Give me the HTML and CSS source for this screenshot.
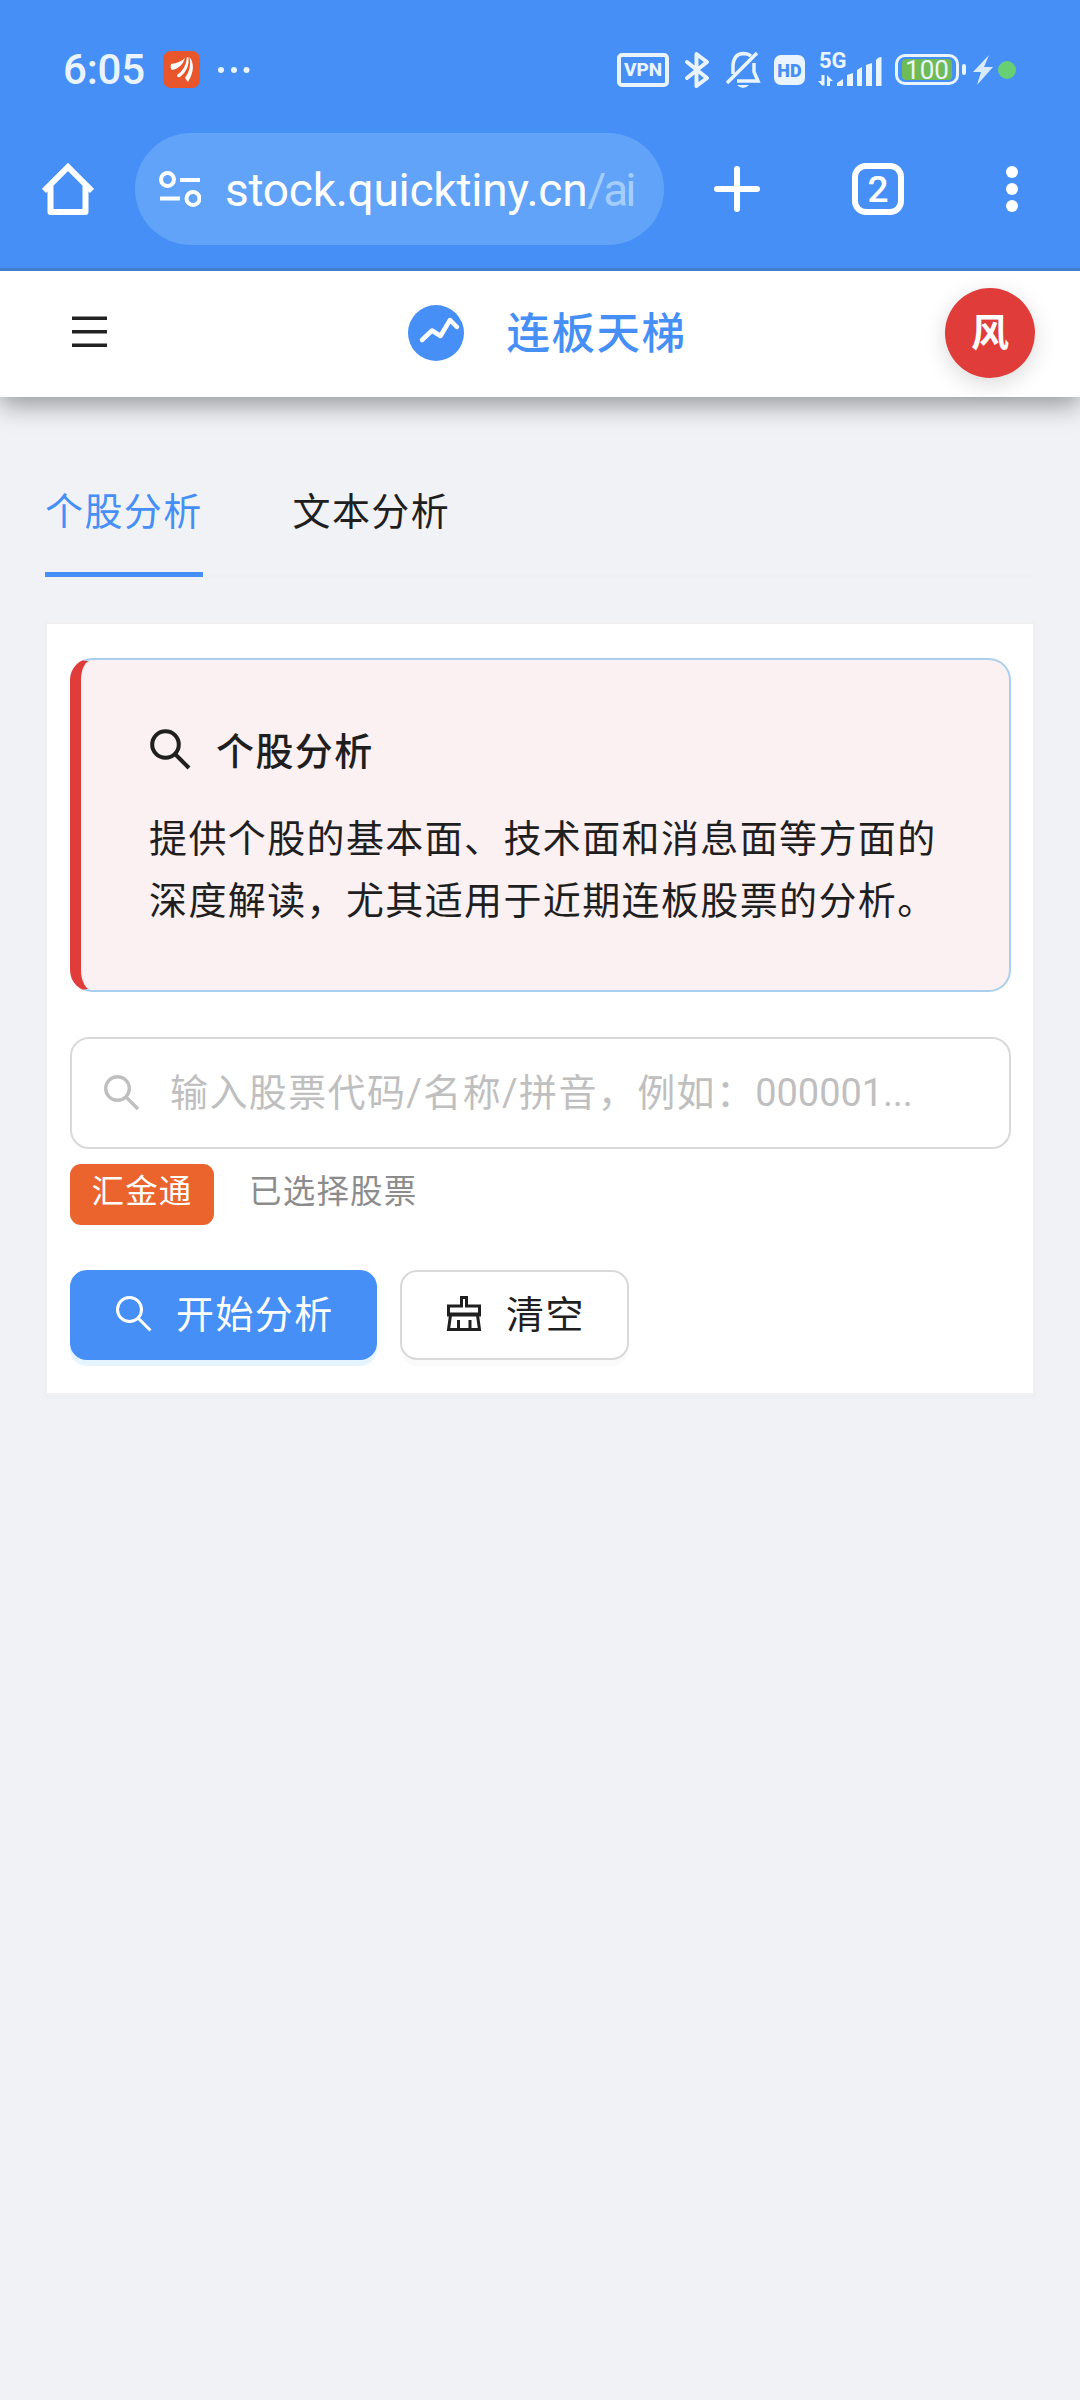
FILE: index.html
```html
<!DOCTYPE html>
<html lang="zh-CN">
<head>
  <meta charset="UTF-8">
  <meta name="viewport" content="width=device-width, initial-scale=1.0">
  <title>连板天梯</title>
  <link rel="stylesheet" href="styles.css">
</head>
<body>
  <div class="browser">
    <div class="status-bar">
      <span class="time">6:05</span>
      <svg class="app-icon" width="37" height="37" viewBox="0 0 37 37">
        <rect width="37" height="37" rx="8" fill="#e9562b"/>
        <path d="M8 13Q17 12 22 7Q19 17 9 19Q7 17 8 13ZM14 24Q23 18 24 6L25.500 6.500Q27 18 17 26Q14 27 14 24ZM22 27Q29 18 26.500 6Q34 16 25 31Z" fill="#fff"/>
      </svg>
      <svg class="more-dots" width="32" height="8" viewBox="0 0 32 8" fill="#e8f4ff">
        <circle cx="3" cy="4" r="3"/><circle cx="16" cy="4" r="3"/><circle cx="28.500" cy="4" r="3"/>
      </svg>
      <div class="status-right">
        <span class="vpn">VPN</span>
        <svg class="bluetooth" width="26" height="38" viewBox="0 0 26 38" fill="none" stroke="#eaf4ff" stroke-width="4" stroke-linejoin="round" stroke-linecap="round">
          <path d="M3 11L23 27L12.500 35V3L23 11L3 27"/>
        </svg>
        <svg class="bell" width="36" height="38" viewBox="0 0 36 38" fill="none" stroke="#eaf4ff" stroke-width="3.500">
          <path d="M8 23V14Q9 3 18 2.500Q23 2.500 26 5M29 12V21L33 30H12M2 32L32 2"/>
          <path d="M12 34H24Q18 40 12 34Z" fill="#eaf4ff" stroke="none"/>
        </svg>
        <span class="hd">HD</span>
        <div class="signal">
          <span class="net">5G</span>
          <svg width="64" height="32" viewBox="0 0 64 32" fill="#eaf4ff">
            <path d="M0 27L4 31.500H6.500V21H3.500V27ZM9 32V21L15 27H12V32ZM19 32V29L25 25V32ZM29 32V21L35 19V32ZM39 32V16L44 13V32ZM48 32V11L54 9V32ZM58 32V6Q60 3 63.500 3V32Z"/>
          </svg>
        </div>
        <span class="battery"><span class="level">100</span></span>
        <span class="battery-tip"></span>
        <svg class="bolt" width="20" height="30" viewBox="0 0 20 30"><path d="M16 0L0 17H8L4 30L20 12H11Z" fill="#d9ebff"/></svg>
        <span class="mic-dot"></span>
      </div>
    </div>

    <div class="toolbar">
      <svg class="home" width="52" height="52" viewBox="0 0 52 52" fill="none" stroke="#fff" stroke-width="6" stroke-linejoin="round">
        <path d="M2 28L26 4L50 28" stroke-linejoin="miter"/>
        <path d="M8.500 23V49H43.500V23"/>
      </svg>
      <div class="url-box">
        <svg width="42" height="36" viewBox="0 0 42 36" fill="none" stroke="#fff" stroke-width="4">
          <circle cx="8.500" cy="8.500" r="6.500"/><path d="M21 9H41M1 27.500H21"/><circle cx="34" cy="27.500" r="6.500"/>
        </svg>
        <span class="url">stock.quicktiny.cn<span class="path">/ai</span></span>
      </div>
      <svg class="plus" width="48" height="48" viewBox="0 0 48 48" stroke="#fff" stroke-width="6" stroke-linecap="round"><path d="M24 4V44M4 24H44"/></svg>
      <span class="tab-count">2</span>
      <svg class="menu-dots" width="12" height="46" viewBox="0 0 12 46" fill="#fff"><circle cx="6" cy="6" r="6"/><circle cx="6" cy="23" r="6"/><circle cx="6" cy="40" r="6"/></svg>
    </div>
  </div>

  <header class="header">
    <svg class="hamburger" width="35" height="32" viewBox="0 0 35 32" fill="#222"><path d="M0 .5H35V4H0ZM0 14H35V17.500H0ZM0 27.500H35V31H0Z"/></svg>
    <div class="brand">
      <svg width="56" height="56" viewBox="0 0 56 56">
        <circle cx="28" cy="28" r="28" fill="#458ff7"/>
        <path d="M14 35L24 25.500L32.500 31L42 15L49 22" fill="none" stroke="#fff" stroke-width="4.500" stroke-linecap="round" stroke-linejoin="round"/>
      </svg>
      <span>连板天梯</span>
    </div>
    <div class="avatar">风</div>
  </header>

  <main class="content">
    <nav class="tabs">
      <a class="tab active">个股分析</a>
      <a class="tab">文本分析</a>
    </nav>

    <section class="card">
      <div class="intro">
        <h2>
          <svg width="41" height="41" viewBox="0 0 41 41" fill="none" stroke="#1f1f1f" stroke-width="4"><circle cx="15.500" cy="15.500" r="13.300"/><path d="M25 25L39 39"/></svg>
          <span>个股分析</span>
        </h2>
        <p>提供个股的基本面、技术面和消息面等方面的深度解读，尤其适用于近期连板股票的分析。</p>
      </div>

      <div class="search">
        <svg width="36" height="36" viewBox="0 0 36 36" fill="none" stroke="#bfbfbf" stroke-width="3.400"><circle cx="13.500" cy="13.500" r="11.800"/><path d="M22 22L34 34"/></svg>
        <span class="placeholder">输入股票代码/名称/拼音，例如：<span class="num">000001...</span></span>
      </div>

      <div class="selected">
        <span class="tag">汇金通</span>
        <span class="hint">已选择股票</span>
      </div>

      <div class="actions">
        <button class="btn primary">
          <svg width="36" height="36" viewBox="0 0 36 36" fill="none" stroke="#fff" stroke-width="3"><circle cx="13.500" cy="13.500" r="12"/><path d="M22 22L34.500 34.500"/></svg>
          <span>开始分析</span>
        </button>
        <button class="btn">
          <svg width="36" height="36" viewBox="0 0 36 36" fill="none" stroke="#1f1f1f" stroke-width="3"><path d="M2.500 19V10H15.500V1.500H20.500V10H33.500V19ZM2.500 18H33.500M4.500 19L2.500 33.500H33.500L31.500 19M12.500 33V24M24 33V24"/></svg>
          <span>清空</span>
        </button>
      </div>
    </section>
  </main>
</body>
</html>
```
FILE: styles.css
```css
* {
  box-sizing: border-box;
}
body {
  margin: 0;
  min-height: 2400px;
  background: #f0f2f5;
  color: #1f1f1f;
  font-family: Roboto, "Noto Sans CJK SC", sans-serif;
  font-size: 38px;
  letter-spacing: 1.375px;
}
svg {
  display: block;
  flex-shrink: 0;
}

/* 浏览器顶部 */
.browser {
  height: 271px;
  background: #458ff7;
  border-bottom: 3px solid #437fce;
  letter-spacing: 0;
}
.status-bar {
  display: flex;
  align-items: center;
  height: 133px;
  padding: 6px 64px 0 63px;
  color: #eaf4ff;
}
.time {
  width: 100px;
  font-size: 42px;
  font-weight: 500;
  letter-spacing: -0.2px;
}
.more-dots {
  margin-left: 18px;
}
.status-right {
  display: flex;
  align-items: center;
  margin-left: auto;
}
.vpn {
  width: 52px;
  height: 34px;
  border: 4px solid #eaf4ff;
  border-radius: 5px;
  font-size: 19px;
  font-weight: 800;
  line-height: 26px;
  text-align: center;
}
.bluetooth {
  margin-left: 15px;
}
.bell {
  margin-left: 15px;
}
.hd {
  width: 31px;
  height: 30px;
  margin-left: 13px;
  border-radius: 7px;
  background: #eaf4ff;
  color: #458ff7;
  font-size: 18px;
  font-weight: 900;
  line-height: 31px;
  text-align: center;
}
.signal {
  position: relative;
  margin-left: 13px;
}
.net {
  position: absolute;
  top: -4px;
  left: 1px;
  font-size: 22px;
  font-weight: 700;
  line-height: 22px;
}
.battery {
  width: 64px;
  height: 31px;
  margin-left: 13px;
  padding: 2px 4px;
  border: 3px solid #eaf4ff;
  border-radius: 10px;
}
.level {
  display: block;
  width: 50px;
  height: 21px;
  border-radius: 4px;
  background: #6fbb57;
  font-size: 26px;
  line-height: 22px;
  text-align: center;
}
.battery-tip {
  width: 4px;
  height: 11px;
  margin-left: 3px;
  border-radius: 2px;
  background: #eaf4ff;
}
.bolt {
  margin-left: 7px;
}
.mic-dot {
  width: 18px;
  height: 18px;
  margin-left: 5px;
  border-radius: 50%;
  background: #68d073;
}

.toolbar {
  display: flex;
  align-items: center;
  height: 112px;
  padding-left: 42px;
}
.url-box {
  display: flex;
  align-items: center;
  width: 529px;
  height: 112px;
  margin-left: 41px;
  padding-left: 24px;
  border-radius: 56px;
  background: #61a3f8;
}
.url {
  margin-top: 2px;
  margin-left: 24px;
  color: #fff;
  font-size: 46px;
  letter-spacing: -0.25px;
  white-space: nowrap;
}
.path {
  color: #a5cdfb;
  letter-spacing: -3px;
}
.plus {
  margin-left: 49px;
}
.tab-count {
  width: 52px;
  height: 52px;
  margin-left: 91px;
  border: 6px solid #fff;
  border-radius: 14px;
  color: #fff;
  font-size: 37px;
  font-weight: 500;
  line-height: 42px;
  text-align: center;
}
.menu-dots {
  margin-left: 102px;
}

/* 页头 */
.header {
  display: flex;
  align-items: center;
  justify-content: space-between;
  height: 126px;
  padding: 0 45px 0 72px;
  background: #fff;
  box-shadow: 0 8px 24px rgba(0, 0, 0, 0.38);
}
.browser {
  position: relative;
}
.hamburger {
  margin-right: 55px;
  margin-bottom: 5px;
}
.brand {
  display: flex;
  align-items: center;
  gap: 43px;
  margin-right: 13px;
  margin-bottom: 2px;
  color: #458ff7;
  font-size: 43.5px;
  font-weight: 500;
  letter-spacing: 1.5px;
  line-height: 56px;
}
.brand span {
  margin-top: 4px;
}
.avatar {
  width: 90px;
  height: 90px;
  margin-bottom: 2px;
  border-radius: 50%;
  background: #e03c3a;
  box-shadow: 0 6px 22px rgba(0, 0, 0, 0.15);
  color: #fff;
  font-weight: 700;
  letter-spacing: 0;
  line-height: 90px;
  text-align: center;
}

.content {
  padding: 79px 45px 0;
}
.tabs {
  display: flex;
  gap: 90px;
  height: 101px;
  margin-bottom: 44px;
  border-bottom: 2px solid #eff0f2;
}
.tab {
  height: 101px;
  line-height: 73px;
}
.tab.active {
  border-bottom: 5px solid #458ff7;
  color: #458ff7;
}
.card {
  height: 774px;
  padding: 34px 22px 0 23px;
  border: 2px solid #f0f0f0;
  border-top-width: 3px;
  background: #fff;
  box-shadow: 0 3px 6px rgba(0, 0, 0, 0.02);
}
.intro {
  height: 334px;
  padding: 59px 60px 0 68px;
  border: 2px solid #a9cfee;
  border-left: 11px solid #e03c3a;
  border-radius: 22px;
  background: #fbf0f2;
}
.intro h2 {
  display: flex;
  align-items: center;
  gap: 25px;
  height: 60px;
  margin: 0 0 30px;
  padding-left: 1px;
  font-size: 38px;
  font-weight: 500;
}
.intro h2 span {
  margin-top: -2px;
}
.intro p {
  margin: 0;
  line-height: 61.5px;
}
.search {
  display: flex;
  align-items: center;
  height: 112px;
  margin-top: 45px;
  padding-left: 32px;
  border: 2px solid #d9d9d9;
  border-radius: 19px;
  color: #bfbfbf;
}
.placeholder {
  margin-top: -7px;
  margin-left: 30px;
  white-space: nowrap;
}
.num {
  letter-spacing: -0.1px;
}
.selected {
  display: flex;
  gap: 35px;
  margin-top: 15px;
  font-size: 32.5px;
  letter-spacing: 1.2px;
  line-height: 57px;
}
.tag {
  width: 144px;
  height: 61px;
  border-radius: 11px;
  background: #ec642d;
  color: #fff;
  text-align: center;
}
.hint {
  color: #8c8c8c;
}
.actions {
  display: flex;
  gap: 23px;
  margin-top: 45px;
}
.btn {
  display: flex;
  align-items: center;
  gap: 24px;
  width: 229px;
  height: 90px;
  padding: 0 0 0 44px;
  border: 2px solid #d9d9d9;
  border-radius: 17px;
  background: #fff;
  box-shadow: 0 6px 0 rgba(0, 0, 0, 0.02);
  color: #1f1f1f;
  font-family: inherit;
  font-size: 38px;
  letter-spacing: 1.375px;
}
.btn span {
  margin-top: -8px;
}
.btn svg {
  margin-top: -3px;
}
.btn.primary {
  width: 307px;
  border-color: #458ff7;
  background: #458ff7;
  box-shadow: 0 6px 0 #e6f4ff;
  color: #fff;
}
```
